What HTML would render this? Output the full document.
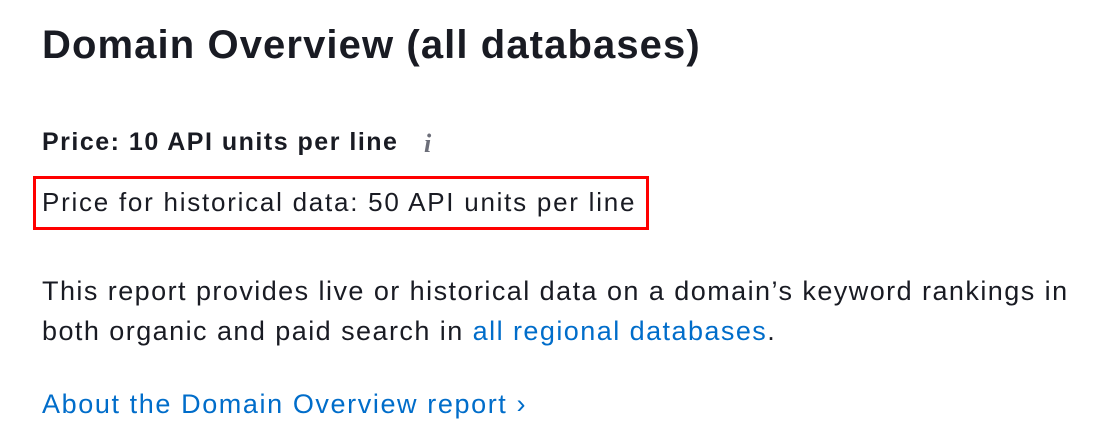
<!DOCTYPE html>
<html><head><meta charset="utf-8"><style>
html,body{margin:0;padding:0;background:#fff;width:1102px;height:444px;overflow:hidden}
body{font-family:"Liberation Sans",sans-serif;color:#191b23;position:relative}
.a{position:absolute;left:42px;white-space:nowrap}
h1{margin:0;font-size:40px;font-weight:bold;top:23px;letter-spacing:1.1px}
.p{font-size:25px;font-weight:bold;top:128px;letter-spacing:1.5px}
.i{position:absolute;left:424px;top:129px;font-family:"Liberation Serif",serif;font-style:italic;font-weight:bold;font-size:26px;color:#6c6e79}
.box{position:absolute;left:33px;top:176px;width:610px;height:48px;border:3px solid #ff0000}
.h{font-size:26px;top:187px;letter-spacing:1.75px}
.t{font-size:27px;line-height:40px;top:271px;letter-spacing:1.45px}
a{color:#006dca;text-decoration:none}
.l{font-size:27px;top:389px;letter-spacing:1.6px}
</style></head><body>
<h1 class="a">Domain Overview (all databases)</h1>
<div class="a p">Price: 10 API units per line</div>
<div class="i">i</div>
<div class="box"></div>
<div class="a h">Price for historical data: 50 API units per line</div>
<div class="a t">This report provides live or historical data on a domain’s keyword rankings in<br>both organic and paid search in <a>all regional databases</a>.</div>
<div class="a l"><a>About the Domain Overview report ›</a></div>
</body></html>
